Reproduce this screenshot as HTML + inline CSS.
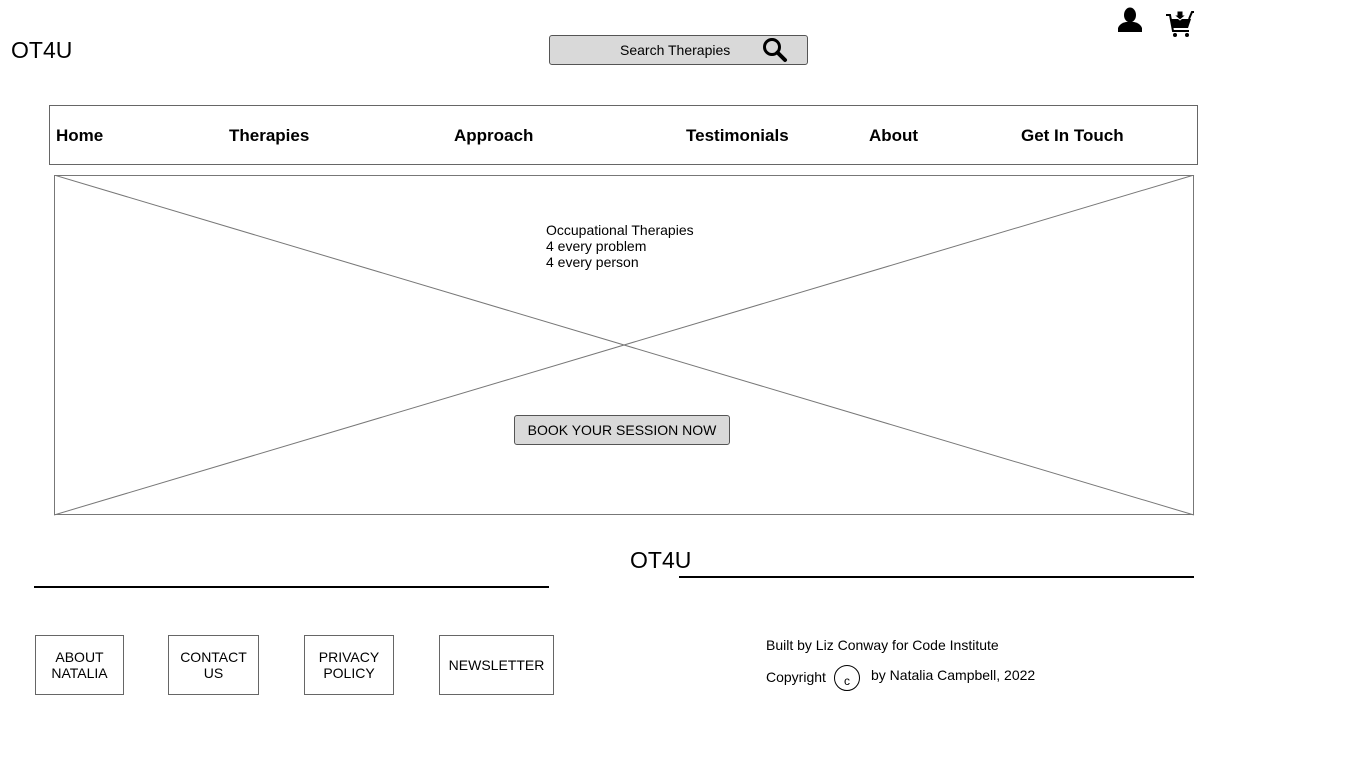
<!DOCTYPE html>
<html><head><meta charset="utf-8"><style>
body{margin:0;width:1366px;height:768px;background:#fff;position:relative;font-family:"Liberation Sans",sans-serif;color:#000;overflow:hidden}
.a{position:absolute}
.nav span{position:absolute;top:20px;font-size:17px;font-weight:bold}
.fb{position:absolute;top:635px;height:60px;border:1px solid #666;font-size:14px;text-align:center;display:flex;align-items:center;justify-content:center;line-height:16px;box-sizing:border-box}
</style></head><body>
<div class="a" style="left:11px;top:37px;font-size:23px">OT4U</div>
<div class="a" style="left:549px;top:35px;width:257px;height:28px;background:#d9d9d9;border:1px solid #555;border-radius:3px"></div>
<div class="a" style="left:620px;top:42px;font-size:14px">Search Therapies</div>
<svg class="a" style="left:762px;top:37px" width="26" height="26" viewBox="0 0 26 26"><circle cx="10" cy="10" r="7.5" fill="none" stroke="#000" stroke-width="3"/><line x1="15.5" y1="15.5" x2="23" y2="23" stroke="#000" stroke-width="4" stroke-linecap="round"/></svg>
<svg class="a" style="left:1116px;top:7px" width="28" height="26" viewBox="0 0 28 26"><ellipse cx="14" cy="8" rx="6" ry="7.5"/><path d="M2 25 L2 21 Q4 16 10 15 L18 15 Q24 16 26 21 L26 25Z"/></svg>
<svg class="a" style="left:1165px;top:9px" width="30" height="30" viewBox="0 0 30 30"><path d="M1 6 L5 6 L8 22 L24 22" fill="none" stroke="#000" stroke-width="2"/><path d="M5 10 L26 10 L23 19 L7 19Z"/><path d="M12 2 L18 2 L18 6 L21 6 L15 11 L9 6 L12 6Z" fill="#000" stroke="#fff" stroke-width="1"/><circle cx="10" cy="26" r="2"/><circle cx="22" cy="26" r="2"/><path d="M24 10 L27 3 L29 3" fill="none" stroke="#000" stroke-width="2"/></svg>
<div class="a nav" style="left:49px;top:105px;width:1147px;height:58px;border:1px solid #666">
<span style="left:6px">Home</span><span style="left:179px">Therapies</span><span style="left:404px">Approach</span><span style="left:636px">Testimonials</span><span style="left:819px">About</span><span style="left:971px">Get In Touch</span></div>
<svg class="a" style="left:54px;top:175px" width="1141" height="341"><rect x="0.5" y="0.5" width="1139" height="339" fill="#fff" stroke="#777"/><line x1="0" y1="0" x2="1140" y2="340" stroke="#777"/><line x1="0" y1="340" x2="1140" y2="0" stroke="#777"/></svg>
<div class="a" style="left:546px;top:222px;font-size:14px;line-height:16px">Occupational Therapies<br>4 every problem<br>4 every person</div>
<div class="a" style="left:514px;top:415px;width:214px;height:28px;background:#d9d9d9;border:1px solid #555;border-radius:3px;font-size:14px;line-height:28px;text-align:center">BOOK YOUR SESSION NOW</div>
<div class="a" style="left:630px;top:547px;font-size:23px">OT4U</div>
<div class="a" style="left:34px;top:586px;width:515px;height:2px;background:#000"></div>
<div class="a" style="left:679px;top:576px;width:515px;height:2px;background:#000"></div>
<div class="fb" style="left:35px;width:89px">ABOUT<br>NATALIA</div>
<div class="fb" style="left:168px;width:91px">CONTACT<br>US</div>
<div class="fb" style="left:304px;width:90px">PRIVACY<br>POLICY</div>
<div class="fb" style="left:439px;width:115px">NEWSLETTER</div>
<div class="a" style="left:766px;top:637px;font-size:14px">Built by Liz Conway for Code Institute</div>
<div class="a" style="left:766px;top:669px;font-size:14px">Copyright</div>
<div class="a" style="left:834px;top:665px;width:24px;height:24px;border:1px solid #000;border-radius:50%;font-size:12px;text-align:center;line-height:30px">c</div>
<div class="a" style="left:871px;top:667px;font-size:14px">by Natalia Campbell, 2022</div>
</body></html>
